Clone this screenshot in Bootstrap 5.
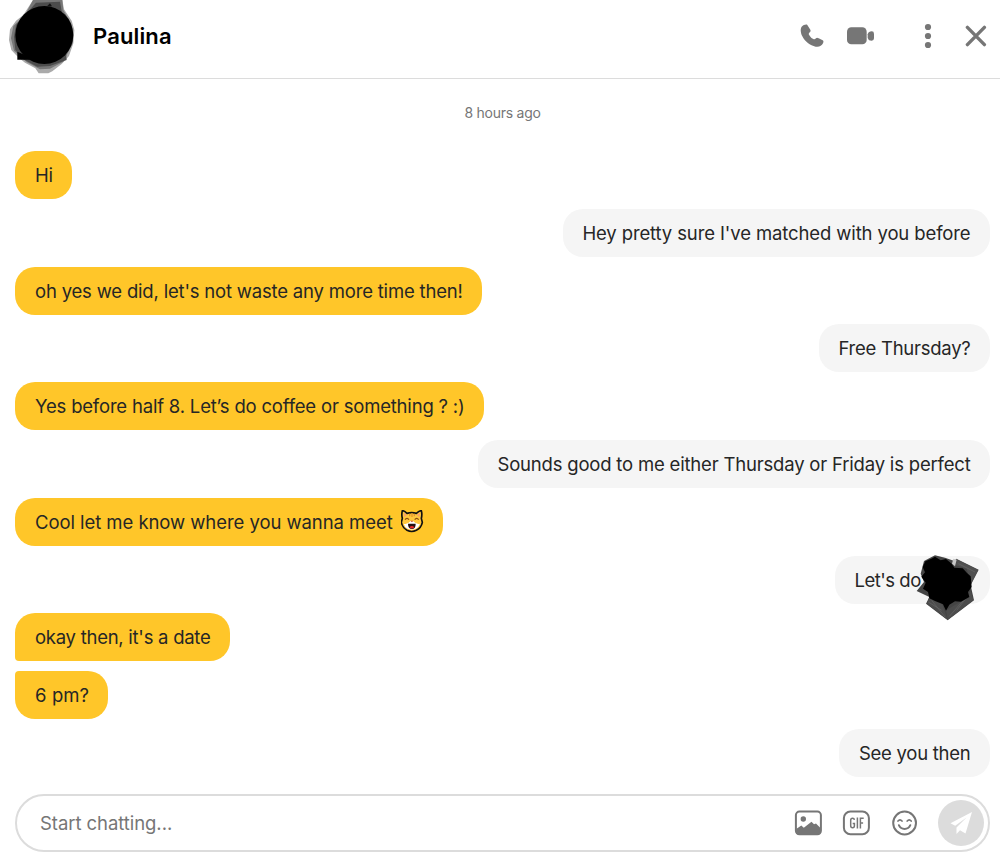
<!DOCTYPE html>
<html lang="en">
<head>
  <meta charset="UTF-8">
  <meta name="viewport" content="width=device-width, initial-scale=1.0">
  <title>Chat - Paulina</title>
  <link href="https://cdn.jsdelivr.net/npm/bootstrap@5.3.0/dist/css/bootstrap.min.css" rel="stylesheet">
  <style>
    body {
      font-family: Inter, "Liberation Sans", sans-serif;
      color: #262626;
      background-color: #fff;
    }
    svg {
      display: block;
      flex-shrink: 0;
    }
    .chat-page {
      height: 852px;
      overflow: hidden;
    }
    .chat-header {
      height: 79px;
      padding-right: 13px;
      border-bottom: 1px solid #dcdcdc;
    }
    .chat-name {
      margin: 0 0 7px 13px;
      font-size: 22px;
      line-height: 28px;
      font-weight: 600;
      letter-spacing: 0.15px;
      color: #000;
    }
    .header-actions {
      height: 71px;
      color: #767676;
    }
    .video-button { margin: 0 49px 0 23px; }
    .close-button { margin-left: 33px; }
    .chat-body {
      padding: 24px 10px 0 15px;
    }
    .chat-time {
      margin-bottom: 28px;
      font-size: 14px;
      line-height: 20px;
      letter-spacing: -0.25px;
      color: #767676;
    }
    .message-list { gap: 9.8px; }
    .bubble {
      height: 48px;
      padding: 0 19.5px;
      border-radius: 20px;
      font-size: 18.5px;
      line-height: 48px;
      white-space: nowrap;
      letter-spacing: -0.19px;
    }
    .bubble-in {
      align-self: flex-start;
      padding-left: 20px;
      padding-right: 19px;
      background-color: #ffc629;
    }
    .bubble-out {
      align-self: flex-end;
      background-color: #f5f5f5;
    }
    .bubble-first { border-bottom-left-radius: 4px; }
    .bubble-last { border-top-left-radius: 4px; }
    .tight { letter-spacing: -0.26px; }
    .loose { letter-spacing: -0.12px; }
    .looser { letter-spacing: -0.06px; }
    .plain { letter-spacing: 0.1px; }
    .bubble-place {
      width: 155px;
      letter-spacing: -0.5px;
    }
    .scribble {
      position: absolute;
      left: 80px;
      top: -4px;
    }
    .composer {
      height: 58px;
      margin: 17px 10px 0 15px;
      padding: 0 4px 0 23px;
      border: 2px solid #dcdcdc;
      border-radius: 29px;
      color: #767676;
    }
    .composer-input {
      min-width: 0;
      padding: 2px 0 0;
      border: 0;
      outline: 0;
      background: transparent;
      font-size: 18.5px;
      letter-spacing: -0.06px;
    }
    .composer-input::placeholder { color: #767676; opacity: 1; }
    .composer-tools { gap: 20px; margin-right: 20px; }
    .send-button {
      width: 46px;
      height: 46px;
      border: 0;
      padding: 0;
      background-color: #dcdcdc;
    }
    .icon-button {
      border: 0;
      padding: 0;
      background: transparent;
      color: inherit;
    }
  </style>
</head>
<body>
  <div class="chat-page d-flex flex-column">
    <header class="chat-header d-flex flex-shrink-0">
      <svg width="80" height="75" viewBox="0 0 240 225">
        <path d="M99 0H187L192 28L215 62L223 90L220 130L207 168L185 192L157 214L145 220H116L106 205L75 188L62 178L48 165L34 150L27 120L30 88L48 62L70 45Z" fill="#aaa" />
        <path d="M99 0H187L190 30L213 70L218 130L190 185L150 206L120 208L80 186L42 152L33 115L40 78L75 45Z" fill="#777" />
        <path d="M108 8L180 5L186 40L200 180L150 198L112 200L70 178L46 150L42 110L48 75Z" fill="#4c4c4c" />
        <path d="M52 179V155L75 165L90 179Z" fill="#000" />
        <circle cx="133" cy="105" r="87" fill="#000" />
        <path d="M141 19L150 10L156 19Z" fill="#111" />
      </svg>
      <div class="d-flex flex-grow-1 align-items-center">
        <h1 class="chat-name">Paulina</h1>
      </div>
      <div class="header-actions d-flex align-items-center">
        <button class="icon-button" aria-label="Call">
          <svg width="24" height="24" viewBox="0 0 72 72" fill="currentColor">
            <path d="M5 8C10 3 19 0 22 3L31 17C33 21 31 23 28 26C25 29 26 31 29 35C33 41 36 43 40 45C43 47 45 46 48 43C50 41 52 41 56 43L68 49C71 51 71 54 69 58C65 66 57 70 47 68C30 65 15 53 7 37C1 25 1 13 5 8Z" />
          </svg>
        </button>
        <button class="icon-button video-button" aria-label="Video call">
          <svg width="28" height="18" viewBox="0 0 84 54" fill="currentColor">
            <rect x="0" y="1" width="59" height="51" rx="13" />
            <path d="M62 22C64 15 68 13 74 13Q81 13 81 20V34Q81 41 74 41C68 41 64 39 62 32Z" />
          </svg>
        </button>
        <button class="icon-button" aria-label="More">
          <svg width="8" height="26" viewBox="0 0 8 26" fill="currentColor">
            <circle cx="4" cy="4" r="3.1" />
            <circle cx="4" cy="13" r="3.1" />
            <circle cx="4" cy="22" r="3.1" />
          </svg>
        </button>
        <button class="icon-button close-button" aria-label="Close">
          <svg width="22" height="22" viewBox="0 0 22 22" fill="none" stroke="currentColor" stroke-width="3.4" stroke-linecap="round">
            <path d="M2.4 2.4L19.4 19.6M19.4 2.4L2.4 19.6" />
          </svg>
        </button>
      </div>
    </header>

    <main class="chat-body flex-shrink-0">
      <div class="chat-time text-center">8 hours ago</div>
      <div class="message-list d-flex flex-column">
        <div class="bubble bubble-in">Hi</div>
        <div class="bubble bubble-out loose">Hey pretty sure I've matched with you before</div>
        <div class="bubble bubble-in">oh yes we did, let's not waste any more time then!</div>
        <div class="bubble bubble-out tight">Free Thursday?</div>
        <div class="bubble bubble-in">Yes before half 8. Let’s do coffee or something ? :)</div>
        <div class="bubble bubble-out">Sounds good to me either Thursday or Friday is perfect</div>
        <div class="bubble bubble-in looser d-flex align-items-center">
          <span>Cool let me know where you wanna meet</span>
          <svg class="ms-2" width="23" height="23" viewBox="2 1 69 69">
            <path d="M6 3Q12 3 20 11Q34 7 48 11Q57 3 63 3Q66 15 63 26L66 38Q63 54 48 62Q34 69 20 62Q6 54 3 38L6 26Q3 15 6 3Z" fill="#ffc83d" stroke="#111" stroke-width="5" stroke-linejoin="round" />
            <path d="M10 9L20 16L12 23ZM59 9L49 16L57 23Z" fill="#f8a06c" />
            <path d="M28 12V20M35 10V22M42 12V20" stroke="#e5952b" stroke-width="4" />
            <path d="M10 42Q22 45 31 34H38Q47 45 59 42Q56 51 47 57Q35 62 22 57Q12 51 10 42Z" fill="#fff" />
            <path d="M14 30Q20 22 26 30M43 30Q49 22 55 30" fill="none" stroke="#8a4b12" stroke-width="3.5" />
            <path d="M30 33H39L35 38Z" fill="#c65328" />
            <path d="M23 42H46Q46 58 35 58Q23 58 23 42Z" fill="#211" />
            <path d="M27 53Q35 45 42 53Q35 60 27 53Z" fill="#e82a2a" />
          </svg>
        </div>
        <div class="bubble bubble-out bubble-place position-relative">
          Let's do
          <svg class="scribble" width="68" height="72" viewBox="285 35 204 216">
            <path d="M312 62L345 45L375 52L403 62L409 55L476 88L452 135L462 180L383 240L318 190L328 170L290 152L312 125L302 100Z" fill="#444" />
            <path d="M409 57L474 89L452 132L440 85L408 75Z" fill="#505050" />
            <path d="M328 170L365 188L383 238L321 190ZM452 152L460 179L383 238L378 210L420 185Z" fill="#4c4c4c" />
            <path d="M335 180L375 230M430 180L388 228M415 70L465 95M325 185L365 210M445 165L410 210" stroke="#666" stroke-width="2" />
            <path d="M400 55L410 58L405 78L396 70Z" fill="#c8c8c8" />
            <path d="M316 63L334 55L345 49L362 60L378 56L395 70L403 82L428 84L441 98L452 108L455 140L444 155L448 170L423 184L405 183L388 193L378 211L369 192L345 182L328 174L324 155L309 145L317 127L304 109L315 96L308 80Z" fill="#000" />
          </svg>
        </div>
        <div class="bubble bubble-in bubble-first tight">okay then, it's a date</div>
        <div class="bubble bubble-in bubble-last plain">6 pm?</div>
        <div class="bubble bubble-out tight">See you then</div>
      </div>
    </main>

    <form class="composer d-flex flex-shrink-0 align-items-center">
      <input class="composer-input flex-grow-1" type="text" placeholder="Start chatting..." aria-label="Message">
      <div class="composer-tools d-flex align-items-center">
        <svg width="28" height="26" viewBox="0 0 28 26">
          <rect x="1.9" y="1.6" width="25" height="22.6" rx="3.5" fill="none" stroke="currentColor" stroke-width="2" />
          <circle cx="9.3" cy="9" r="2.7" fill="currentColor" />
          <path d="M2.2 19L7.3 15.5L9.8 17.8L17.5 11.8L20 14.2L22 13.5L26.5 18V22Q26.5 24.5 24 24.5H4.7Q2.2 24.5 2.2 22Z" fill="currentColor" />
        </svg>
        <svg width="28" height="26" viewBox="0 0 28 26">
          <rect x="1.9" y="1.6" width="25" height="22.6" rx="6.5" fill="none" stroke="currentColor" stroke-width="2" />
          <path d="M12.4 9.8Q12.2 8.2 10.6 8.2Q8.7 8.2 8.7 10.2V15.8Q8.7 17.8 10.6 17.8Q12.4 17.8 12.4 15.8V13.4H10.7M15.4 7.6V18.4M18.4 18.4V8.3H21.7M18.4 13H21.1" fill="none" stroke="currentColor" stroke-width="1.5" />
        </svg>
        <svg width="28" height="26" viewBox="0 0 28 26" fill="none" stroke="currentColor" stroke-width="2" stroke-linecap="round">
          <circle cx="14.6" cy="13" r="11.4" />
          <path d="M8.9 15.2Q10.6 19 14.6 19Q18.6 19 20.3 15.2" />
          <path d="M8 11Q10 8.6 12 11M17.2 11Q19.2 8.6 21.2 11" stroke-width="1.7" />
        </svg>
      </div>
      <button class="send-button rounded-circle" type="button" aria-label="Send">
        <svg width="46" height="46" viewBox="0 0 46 46" fill="#fff">
          <path d="M34 12L12.5 23.2L17.2 25.8L28.5 17.5L18.5 27.5V34L22 30.2L27.5 33.5Z" />
        </svg>
      </button>
    </form>
  </div>
  <script src="https://cdn.jsdelivr.net/npm/bootstrap@5.3.0/dist/js/bootstrap.bundle.min.js"></script>
</body>
</html>
